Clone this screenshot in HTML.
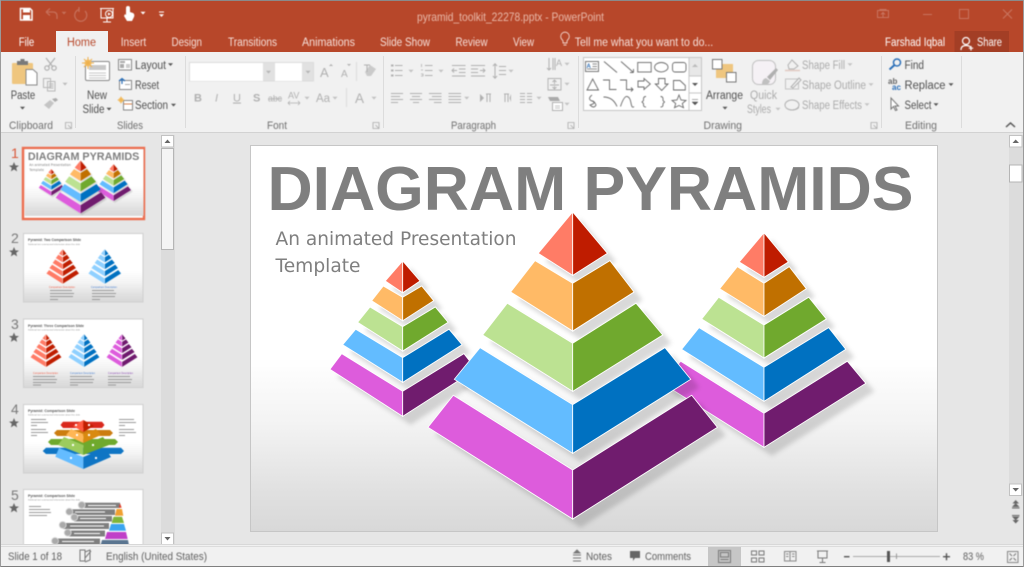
<!DOCTYPE html>
<html><head><meta charset="utf-8"><title>pyramid_toolkit_22278.pptx - PowerPoint</title>
<style>
html,body{margin:0;padding:0;width:1024px;height:567px;overflow:hidden;background:#e6e6e6}
svg{display:block}
text{font-family:"Liberation Sans",sans-serif}
.soft{filter:blur(.4px)}
.soft2{filter:blur(.55px)}
.s0{filter:blur(.25px)}
.g{stroke:#6a6a6a;fill:none;stroke-width:.9}
</style></head><body>
<svg width="1024" height="567" viewBox="0 0 1024 567" xmlns="http://www.w3.org/2000/svg">
<defs>
<linearGradient id="bg" x1="0" y1="0" x2="0" y2="1"><stop offset="0" stop-color="#fff"/><stop offset=".55" stop-color="#fff"/><stop offset=".72" stop-color="#f3f3f3"/><stop offset=".9" stop-color="#e0e0e0"/><stop offset="1" stop-color="#d8d8d8"/></linearGradient>
<filter id="sh" x="-20%" y="-20%" width="150%" height="150%"><feDropShadow dx="8" dy="8" stdDeviation="2.500" flood-color="#000" flood-opacity=".15"/></filter>
<clipPath id="c5"><rect x="0" y="0" width="160" height="546"/></clipPath>

<g id="pL" stroke="#fff" stroke-width="3">
<polygon points="572.7,212 538.3,253.3 572.7,275.3"/>
<polygon points="535,260.7 510.7,292 572.7,331 572.7,283.3"/>
<polygon points="507.3,303.3 482.7,335 572.7,391.3 572.7,343.3"/>
<polygon points="480,347.7 454.3,379.3 572.7,453.3 572.7,404.7"/>
<polygon points="453.3,395.3 428,427.3 572.7,519 572.7,470"/>
</g>
<g id="pR" stroke="#fff" stroke-width="3">
<polygon points="572.7,212 607.3,253.3 572.7,275.3"/>
<polygon points="610,260.7 634,292 572.7,331 572.7,283.3"/>
<polygon points="636,303.3 662.7,335 572.7,391.3 572.7,343.3"/>
<polygon points="665,347.7 690.7,379.3 572.7,453.3 572.7,404.7"/>
<polygon points="691.7,395.3 717.3,427.3 572.7,519 572.7,470"/>
</g>

<g id="slideArt">
<rect x="250.5" y="145.5" width="687" height="386" fill="url(#bg)" stroke="#c6c6c6"/>
<text x="267.500" y="210" font-size="62" font-weight="700" fill="#7f7f7f" textLength="646" lengthAdjust="spacingAndGlyphs">DIAGRAM PYRAMIDS</text>
<text x="275.5" y="245" font-size="19" style="font-family:'DejaVu Sans',sans-serif" fill="#7f7f7f" textLength="241" lengthAdjust="spacingAndGlyphs">An animated Presentation</text>
<text x="275.5" y="272" font-size="19" style="font-family:'DejaVu Sans',sans-serif" fill="#7f7f7f" textLength="85" lengthAdjust="spacingAndGlyphs">Template</text>

<g filter="url(#sh)" stroke="#fff" stroke-width=".8">
<polygon fill="#dd5cdc" points="680.7,361.3 662.3,383.3 764,447.3 764,413.3"/>
<polygon fill="#6f1a6e" points="847.3,361.3 865.7,383.3 764,447.3 764,413.3"/>
<polygon fill="#64bcff" points="699,327.7 681.7,349.3 764,401.3 764,367.3"/>
<polygon fill="#0071c1" points="828.7,327.7 845.7,349.3 764,401.3 764,367.3"/>
<polygon fill="#bce292" points="718.7,297.3 701.7,319 764,358 764,325"/>
<polygon fill="#6fa92d" points="808.7,297.3 826.3,319 764,358 764,325"/>
<polygon fill="#ffba66" points="737.3,266.7 719.7,288.7 764,316.3 764,283.3"/>
<polygon fill="#c06f00" points="789.3,266.7 806.3,288.7 764,316.3 764,283.3"/>
<polygon fill="#ff7b66" points="764,232.7 739.3,262 764,277.3"/>
<polygon fill="#bf1e00" points="764,232.7 788.3,262 764,277.3"/>
</g>
<g filter="url(#sh)" stroke="#fff" stroke-width=".8">
<polygon fill="#dd5cdc" points="341.7,353.7 330,369.3 402.7,416.3 402.7,391.3"/>
<polygon fill="#6f1a6e" points="464,353.7 476,369.3 402.7,416.3 402.7,391.3"/>
<polygon fill="#64bcff" points="355.7,329.3 342.7,344.7 402.7,382.3 402.7,357.7"/>
<polygon fill="#0071c1" points="449,329.3 462,344.7 402.7,382.3 402.7,357.7"/>
<polygon fill="#bce292" points="370,307 357.7,322.3 402.7,351 402.7,326.7"/>
<polygon fill="#6fa92d" points="435.3,307 448,322.3 402.7,351 402.7,326.7"/>
<polygon fill="#ffba66" points="383.3,286 371.7,300.7 402.7,320.7 402.7,297.3"/>
<polygon fill="#c06f00" points="421.7,286 433.7,300.7 402.7,320.7 402.7,297.3"/>
<polygon fill="#ff7b66" points="402.7,261 385.3,281 402.7,292.7"/>
<polygon fill="#bf1e00" points="402.7,261 420,281 402.7,292.7"/>
</g>
<g filter="url(#sh)" stroke="#fff" stroke-width=".8">
<polygon fill="#dd5cdc" points="453.3,395.3 428,427.3 572.7,519 572.7,470"/>
<polygon fill="#6f1a6e" points="691.7,395.3 717.3,427.3 572.7,519 572.7,470"/>
<polygon fill="#64bcff" points="480,347.7 454.3,379.3 572.7,453.3 572.7,404.7"/>
<polygon fill="#0071c1" points="665,347.7 690.7,379.3 572.7,453.3 572.7,404.7"/>
<polygon fill="#bce292" points="507.3,303.3 482.7,335 572.7,391.3 572.7,343.3"/>
<polygon fill="#6fa92d" points="636,303.3 662.7,335 572.7,391.3 572.7,343.3"/>
<polygon fill="#ffba66" points="535,260.7 510.7,292 572.7,331 572.7,283.3"/>
<polygon fill="#c06f00" points="610,260.7 634,292 572.7,331 572.7,283.3"/>
<polygon fill="#ff7b66" points="572.7,212 538.3,253.3 572.7,275.3"/>
<polygon fill="#bf1e00" points="572.7,212 607.3,253.3 572.7,275.3"/>
</g>
</g>

<polygon id="star" points="0,-5 1.4,-1.6 5,-1.4 2.2,.8 3.1,4.4 0,2.4 -3.1,4.4 -2.2,.8 -5,-1.4 -1.4,-1.6"/>
<path id="caret" d="M-2.5,-1.2H2.5L0,1.5Z"/>
</defs>

<rect width="1024" height="567" fill="#e6e6e6"/>

<g class="s0"><use href="#slideArt"/></g>

<!-- main scrollbar -->
<rect x="1009" y="135" width="14" height="410" fill="#dcdcdc"/>
<rect x="1009.5" y="135.5" width="12.5" height="11.5" fill="#fff" stroke="#c2c2c2"/>
<path d="M1012.5,143H1019L1015.7,139.5Z" fill="#666"/>
<rect x="1009.5" y="165" width="12.5" height="17" fill="#fff" stroke="#b5b5b5"/>
<rect x="1009.5" y="484" width="12" height="11.5" fill="#fff" stroke="#c2c2c2"/>
<path d="M1012.5,488H1019L1015.7,491.5Z" fill="#666"/>
<rect x="1009" y="496" width="14" height="49" fill="#e6e6e6"/>
<g class="soft" fill="#666">
<path d="M1015.7,500L1012.5,503.5H1019ZM1015.7,503L1012,507H1019.5ZM1012,507.5H1019.5V508.5H1012Z"/>
<path d="M1012,515H1019.5V516H1012ZM1012,516.5H1019.5L1015.7,520.5ZM1012.5,520H1019L1015.7,523.5Z"/>
</g>

<!-- thumbnail pane -->
<rect x="0" y="133" width="176" height="413" fill="#e6e6e6"/>
<rect x="161" y="135" width="14" height="410" fill="#dcdcdc"/>
<rect x="161.5" y="135.5" width="12" height="11.5" fill="#fff" stroke="#c2c2c2"/>
<path d="M164.5,143H170.5L167.5,139.5Z" fill="#666"/>
<rect x="161.5" y="148.5" width="12" height="101" fill="#f4f4f4" stroke="#b5b5b5"/>
<rect x="161.5" y="533" width="12" height="11.5" fill="#fff" stroke="#c2c2c2"/>
<path d="M164.5,537H170.5L167.5,540.5Z" fill="#666"/>

<g class="soft2" clip-path="url(#c5)">
<rect x="23" y="148" width="121" height="71" fill="#fff" stroke="#ec6d4e" stroke-width="2.4"/>
<g transform="translate(24.9,149) scale(.1725) translate(-250,-145)"><use href="#slideArt"/></g>
<rect x="23.5" y="233.5" width="119.5" height="68.5" fill="url(#bg)" stroke="#cfcfcf"/>
<text x="28" y="241" font-size="3.4" font-weight="700" fill="#555" textLength="53" lengthAdjust="spacingAndGlyphs">Pyramid: Two Comparison Slide</text>
<text x="28" y="245" font-size="2.2" fill="#888" textLength="52" lengthAdjust="spacingAndGlyphs">Subhead text summarized information about this slide</text>
<g transform="translate(62.7,249) scale(.114) translate(-572.7,-212)"><use href="#pL" fill="#ff7b66"/><use href="#pR" fill="#bf1e00"/></g>
<g transform="translate(104.7,249) scale(.114) translate(-572.7,-212)"><use href="#pL" fill="#8fd0ff"/><use href="#pR" fill="#0071c1"/></g>
<text x="49" y="288" font-size="2.5" fill="#f0604a" textLength="26" lengthAdjust="spacingAndGlyphs">Comparison Description</text>
<text x="91" y="288" font-size="2.5" fill="#4a80d0" textLength="26" lengthAdjust="spacingAndGlyphs">Comparison Description</text>
<g fill="#999"><rect x="50" y="290" width="22" height="1"/><rect x="50" y="293" width="24" height="1"/><rect x="50" y="296" width="23" height="1"/><rect x="50" y="299" width="8" height="1"/><rect x="92" y="290" width="22" height="1"/><rect x="92" y="293" width="24" height="1"/><rect x="92" y="296" width="23" height="1"/><rect x="92" y="299" width="8" height="1"/></g>
<rect x="23.5" y="319" width="119.5" height="68.5" fill="url(#bg)" stroke="#cfcfcf"/>
<text x="28" y="327" font-size="3.4" font-weight="700" fill="#555" textLength="56" lengthAdjust="spacingAndGlyphs">Pyramid: Three Comparison Slide</text>
<text x="28" y="330.5" font-size="2.2" fill="#888" textLength="52" lengthAdjust="spacingAndGlyphs">Subhead text summarized information about this slide</text>
<g transform="translate(46,334) scale(.108) translate(-572.7,-212)"><use href="#pL" fill="#ff7b66"/><use href="#pR" fill="#bf1e00"/></g>
<g transform="translate(84,334) scale(.108) translate(-572.7,-212)"><use href="#pL" fill="#8fd0ff"/><use href="#pR" fill="#0071c1"/></g>
<g transform="translate(122,334) scale(.108) translate(-572.7,-212)"><use href="#pL" fill="#dd5cdc"/><use href="#pR" fill="#6f1a6e"/></g>
<text x="33" y="374" font-size="2.5" fill="#f0604a" textLength="25" lengthAdjust="spacingAndGlyphs">Comparison Description</text>
<text x="70" y="374" font-size="2.5" fill="#4a80d0" textLength="25" lengthAdjust="spacingAndGlyphs">Comparison Description</text>
<text x="108" y="374" font-size="2.5" fill="#8a4ab0" textLength="25" lengthAdjust="spacingAndGlyphs">Comparison Description</text>
<g fill="#999"><rect x="33" y="376" width="22" height="1"/><rect x="33" y="379" width="24" height="1"/><rect x="33" y="382" width="23" height="1"/><rect x="33" y="384.5" width="8" height="1"/><rect x="70" y="376" width="22" height="1"/><rect x="70" y="379" width="24" height="1"/><rect x="70" y="382" width="23" height="1"/><rect x="70" y="384.5" width="8" height="1"/><rect x="108" y="376" width="22" height="1"/><rect x="108" y="379" width="24" height="1"/><rect x="108" y="382" width="23" height="1"/><rect x="108" y="384.5" width="8" height="1"/></g>
<rect x="23.5" y="404.5" width="119.5" height="68.5" fill="url(#bg)" stroke="#cfcfcf"/>
<text x="28" y="412" font-size="3.4" font-weight="700" fill="#555" textLength="47" lengthAdjust="spacingAndGlyphs">Pyramid: Comparison Slide</text>
<text x="28" y="415.5" font-size="2.2" fill="#888" textLength="52" lengthAdjust="spacingAndGlyphs">Subhead text summarized information about this slide</text>
<g fill="#999"><rect x="31" y="419" width="15" height="1"/><rect x="31" y="422" width="17" height="1"/><rect x="31" y="425" width="6" height="1"/><rect x="31" y="429" width="15" height="1"/><rect x="31" y="432" width="17" height="1"/><rect x="31" y="435" width="6" height="1"/><rect x="119" y="419" width="15" height="1"/><rect x="119" y="422" width="17" height="1"/><rect x="119" y="425" width="6" height="1"/><rect x="119" y="429" width="15" height="1"/><rect x="119" y="432" width="17" height="1"/><rect x="119" y="435" width="6" height="1"/></g>
<polygon points="63,421.7 102,421.7 104.500,425 102,428 63,428 60.500,425" fill="#d9281c"/>
<polygon points="57,430 110,430 113,433 110,436 57,436 54,433" fill="#cc7d10"/>
<polygon points="51,439 115,439 118,442 115,445 51,445 48,442" fill="#6fa92d"/>
<polygon points="46,447.700 121,447.700 124,451 121,454 46,454 42.700,451" fill="#0f75c4"/>
<polygon points="83.300,420 73,426 83.300,432" fill="#ff5a40"/><polygon points="83.300,420 94,426 83.300,432" fill="#c01f00"/>
<polygon points="71,429 66,435 83.300,443 83.300,434" fill="#ffb655"/><polygon points="96,429 101,435 83.300,443 83.300,434" fill="#d98a10"/>
<polygon points="64,437 58,445 83.300,455 83.300,445" fill="#9ccb5e"/><polygon points="103,437 109,445 83.300,455 83.300,445" fill="#6fa92d"/>
<polygon points="59,448 55.300,456.700 83.300,469 83.300,457" fill="#64bcff"/><polygon points="105,448 111,457 83.300,469 83.300,457" fill="#0f75c4"/>
<g fill="#fff"><rect x="75" y="424" width="2" height="2"/><rect x="88" y="424" width="2" height="2"/><rect x="76" y="434" width="2" height="2"/><rect x="88" y="434" width="2" height="2"/><rect x="72" y="444" width="2" height="2"/><rect x="92" y="444" width="2" height="2"/><rect x="70" y="457" width="2" height="2"/><rect x="95" y="457" width="2" height="2"/></g>
<rect x="23.5" y="489.5" width="119.5" height="68.5" fill="#fff" stroke="#cfcfcf"/>
<text x="28" y="497" font-size="3.4" font-weight="700" fill="#555" textLength="47" lengthAdjust="spacingAndGlyphs">Pyramid: Comparison Slide</text>
<text x="28" y="500.5" font-size="2.2" fill="#888" textLength="52" lengthAdjust="spacingAndGlyphs">Subhead text summarized information about this slide</text>
<g fill="#999"><rect x="29" y="506" width="12" height="1"/><rect x="29" y="509" width="21" height="1"/><rect x="29" y="512" width="22" height="1"/><rect x="29" y="515" width="18" height="1"/></g>
<g fill="#7f7f7f"><rect x="82" y="502.700" width="38" height="5.300"/><rect x="70" y="509.300" width="45" height="5.700"/><rect x="74" y="516" width="38" height="5.500"/><rect x="63" y="523" width="46" height="6"/><rect x="68" y="530.500" width="37" height="6"/><rect x="55" y="538.500" width="45" height="6"/></g>
<g fill="#fff"><rect x="88" y="505" width="28" height="1"/><rect x="75" y="511.500" width="30" height="1"/><rect x="80" y="518" width="26" height="1"/><rect x="70" y="525.500" width="34" height="1"/><rect x="74" y="533" width="26" height="1"/><rect x="62" y="541" width="32" height="1"/></g>
<g fill="#aaa" stroke="#ddd" stroke-width=".8"><circle cx="81.700" cy="505" r="3.500"/><circle cx="69.300" cy="511.700" r="3.500"/><circle cx="74.300" cy="517.300" r="3.500"/><circle cx="62.700" cy="525" r="3.500"/><circle cx="67.700" cy="532.700" r="3.500"/><circle cx="55" cy="541" r="3.500"/></g>
<polygon points="120,503.300 121.700,507.700 118.700,507.700" fill="#e0402a"/>
<polygon points="116.500,509 122,509 123.300,515.700 115,515.700" fill="#f0a030"/>
<polygon points="113.500,516.700 122,516.700 124,523 111.700,523" fill="#7fb53a"/>
<polygon points="111,524 124,524 126,530.700 109,530.700" fill="#3aa5f0"/>
<polygon points="107,532 126,532 127.700,539 105,539" fill="#c040c8"/>
<polygon points="102,540 128,540 129.300,547 100,547" fill="#5a7590"/>
</g>
<g font-size="14" fill="#7a7a7a" class="soft">
<text x="11" y="158" fill="#d9583a">1</text><text x="11" y="243">2</text><text x="11" y="329">3</text><text x="11" y="414">4</text><text x="11" y="500">5</text>
</g>
<g fill="#666" class="soft"><use href="#star" x="14" y="167"/><use href="#star" x="14" y="252"/><use href="#star" x="14" y="337.500"/><use href="#star" x="14" y="423"/><use href="#star" x="14" y="508"/></g>

<!-- title bar and tabs -->
<rect width="1024" height="52" fill="#b7472a"/>
<rect x="0" y="0" width="1024" height="1" fill="#8a8a8a"/>
<rect x="954.500" y="31" width="54.500" height="21" fill="#a33e25"/>
<rect x="56" y="31" width="52" height="22" fill="#f1f1f1"/>

<g class="soft">
<path d="M20.500,8.500H30L32,10.500V20H20.500Z" fill="none" stroke="#fff" stroke-width="1.500"/><rect x="23" y="9" width="7" height="3.500" fill="#fff"/><rect x="23" y="15" width="7" height="4.500" fill="#fff"/>
<path d="M46,12L50,8.500M46,12L50,15.500M46,12H53Q57,12 57,16V19" fill="none" stroke="#c66f59" stroke-width="1.300"/>
<use href="#caret" x="64" y="13" fill="#c66f59"/>
<path d="M79,9.500A6,6 0 1 0 85,11M79,7V12" fill="none" stroke="#c66f59" stroke-width="1.300"/>
<path d="M100,8.500H114M101,9V18H113V9M107,18V22M103,22H111" fill="none" stroke="#fff" stroke-width="1"/><circle cx="109" cy="14" r="3.500" fill="none" stroke="#fff"/><path d="M108,12.500L111,14L108,15.500Z" fill="#fff"/>
<path d="M126,8Q126,6 128,6Q130,6 130,8V12L133,13Q135,14 134,17L132,21H127L124,16L125,14L126,15Z" fill="#fff"/>
<use href="#caret" x="143" y="13" fill="#fff"/>
<path d="M159,12H164" stroke="#fff"/><use href="#caret" x="161.500" y="15.500" fill="#fff"/>

<text x="417" y="21" font-size="12" fill="#e9b9a9" textLength="187" lengthAdjust="spacingAndGlyphs">pyramid_toolkit_22278.pptx - PowerPoint</text>

<g stroke="#c97560" fill="none"><rect x="877.500" y="10.500" width="11" height="7"/><path d="M880,10.500V9.500H886V10.500M883,17V12.500M881,14.500L883,12.500L885,14.500"/><path d="M923,14.500H932"/><rect x="959.500" y="9.500" width="9" height="9"/><path d="M1003,9.500L1012,18.500M1012,9.500L1003,18.500" stroke-width="1.100"/></g>

<g font-size="11.500" fill="#f6e0da">
<text x="18.700" y="46" fill="#fff" textLength="15.500" lengthAdjust="spacingAndGlyphs">File</text>
<text x="67" y="46" fill="#b7472a" textLength="29" lengthAdjust="spacingAndGlyphs">Home</text>
<text x="120.700" y="46" textLength="25.500" lengthAdjust="spacingAndGlyphs">Insert</text>
<text x="171.500" y="46" textLength="30.500" lengthAdjust="spacingAndGlyphs">Design</text>
<text x="228" y="46" textLength="49" lengthAdjust="spacingAndGlyphs">Transitions</text>
<text x="302" y="46" textLength="53" lengthAdjust="spacingAndGlyphs">Animations</text>
<text x="380" y="46" textLength="50" lengthAdjust="spacingAndGlyphs">Slide Show</text>
<text x="455.500" y="46" textLength="32" lengthAdjust="spacingAndGlyphs">Review</text>
<text x="513" y="46" textLength="21" lengthAdjust="spacingAndGlyphs">View</text>
<text x="574.700" y="46" textLength="138.500" lengthAdjust="spacingAndGlyphs">Tell me what you want to do...</text>
<text x="885" y="46" fill="#fff" textLength="60" lengthAdjust="spacingAndGlyphs">Farshad Iqbal</text>
<text x="977" y="46" fill="#fff" textLength="25" lengthAdjust="spacingAndGlyphs">Share</text>
</g>
<path d="M563,43V41.500Q563,40.500 562,39.500A4.300,4.300 0 1 1 568,39.500Q567,40.500 567,41.500V43ZM563.500,45H566.500" fill="none" stroke="#f3d8d0" stroke-width=".9"/>
<circle cx="966" cy="41" r="3.500" fill="none" stroke="#fff" stroke-width="1.200"/><path d="M961,50Q961,45.500 966,45.500Q969,45.500 970.500,47M971,46V50.500M968.800,48.200H973.200" fill="none" stroke="#fff" stroke-width="1.200"/>
</g>

<!-- ribbon -->
<rect x="0" y="52" width="1024" height="81" fill="#f1f1f1"/>
<rect x="0" y="132" width="1024" height="1" fill="#d2d2d2"/>
<g fill="#dcdcdc"><rect x="75" y="56" width="1" height="72"/><rect x="185" y="56" width="1" height="72"/><rect x="383" y="56" width="1" height="72"/><rect x="578" y="56" width="1" height="72"/><rect x="881" y="56" width="1" height="72"/><rect x="961" y="56" width="1" height="72"/></g>

<g class="soft">
<g font-size="11" fill="#707070">
<text x="9" y="129" textLength="44" lengthAdjust="spacingAndGlyphs">Clipboard</text>
<text x="117" y="129" textLength="26" lengthAdjust="spacingAndGlyphs">Slides</text>
<text x="267" y="129" textLength="20" lengthAdjust="spacingAndGlyphs">Font</text>
<text x="451" y="129" textLength="45" lengthAdjust="spacingAndGlyphs">Paragraph</text>
<text x="703.500" y="129" textLength="38.500" lengthAdjust="spacingAndGlyphs">Drawing</text>
<text x="905" y="129" textLength="32" lengthAdjust="spacingAndGlyphs">Editing</text>
</g>
<g stroke="#aaa" fill="none" stroke-width=".8"><path d="M65.500,122.500H71.500V128.500H65.500ZM68,125L71,128"/><path d="M373,122.500H379V128.500H373ZM375.500,125L378.500,128"/><path d="M568,122.500H574V128.500H568ZM570.500,125L573.500,128"/><path d="M871,122.500H877V128.500H871ZM873.500,125L876.500,128"/></g>
<path d="M1006,127L1010.500,123L1015,127" fill="none" stroke="#555" stroke-width="1.500"/>

<!-- clipboard -->
<rect x="12" y="63" width="21" height="21" rx="1" fill="#efc67f"/>
<rect x="17" y="61" width="11" height="4" fill="#7a7a7a"/><rect x="20.500" y="59" width="4" height="3" fill="#7a7a7a"/>
<path d="M26,69.500H33L37,73V85H26Z" fill="#fff" stroke="#888"/>
<text x="10.700" y="99" font-size="11.500" fill="#505050" textLength="24.500" lengthAdjust="spacingAndGlyphs">Paste</text>
<use href="#caret" x="22.500" y="108" fill="#555"/>
<path d="M46,58L53,67M55,58L48,67" stroke="#b0b0b0" fill="none" stroke-width="1.200"/><circle cx="47" cy="68" r="2.200" fill="none" stroke="#b0b0b0" stroke-width="1.200"/><circle cx="54" cy="68" r="2.200" fill="none" stroke="#b0b0b0" stroke-width="1.200"/>
<path d="M43.500,78.500H50.500V87.500H43.500ZM47.500,81.500H55V91H47.500ZM49,84H53.500M49,86H53.500M49,88H53.500" fill="#f1f1f1" stroke="#b8b8b8"/>
<use href="#caret" x="65" y="84" fill="#bbb"/>
<path d="M44,105L50,100L54,103L49,109Z" fill="#c4c4c4"/><path d="M52,99L56,98L58,100L55,102Z" fill="#aaa"/>

<!-- new slide -->
<rect x="85.500" y="61.500" width="24" height="19" rx="1.500" fill="#fff" stroke="#888"/>
<rect x="89" y="65" width="17" height="5" fill="#c8c8c8"/><path d="M89,73H106M89,75.500H106M89,78H106" stroke="#b5b5b5" stroke-width=".8"/>
<circle cx="88" cy="63" r="3.500" fill="#f4c26a"/><path d="M88,57V69M82,63H94M84,59L92,67M92,59L84,67" stroke="#eeb04d" stroke-width="1"/>
<g font-size="11.500" fill="#505050">
<text x="87" y="99" textLength="20" lengthAdjust="spacingAndGlyphs">New</text>
<text x="82.500" y="113" textLength="22" lengthAdjust="spacingAndGlyphs">Slide</text>
<text x="135" y="69" textLength="31" lengthAdjust="spacingAndGlyphs">Layout</text>
<text x="135" y="89" textLength="24" lengthAdjust="spacingAndGlyphs">Reset</text>
<text x="135" y="109" textLength="33" lengthAdjust="spacingAndGlyphs">Section</text>
</g>
<use href="#caret" x="109" y="109" fill="#555"/><use href="#caret" x="170.500" y="64.500" fill="#555"/><use href="#caret" x="173.500" y="105" fill="#555"/>
<rect x="118.500" y="59.500" width="13" height="10.500" fill="#fff" stroke="#888"/><rect x="120" y="61" width="5" height="2" fill="#aaa"/><rect x="120" y="64" width="4" height="4" fill="#aaa"/><rect x="126" y="64" width="4" height="4" fill="#ccc"/>
<rect x="119.500" y="80.500" width="12" height="9" fill="#fff" stroke="#888"/><path d="M119,81L122,78.500L125,81M122,79V84" fill="none" stroke="#2b6fb8" stroke-width="1.200"/><rect x="125" y="84" width="5" height="1" fill="#aaa"/>
<rect x="123.500" y="100.500" width="9" height="9.500" fill="#fff" stroke="#888"/><path d="M124,104H132" stroke="#d9844a"/><circle cx="121" cy="100" r="2.500" fill="#f4c26a"/><path d="M121,96.500V103.500M117.500,100H124.500" stroke="#eeb04d" stroke-width=".8"/>

<!-- font -->
<rect x="189.500" y="62.500" width="124" height="18.500" fill="#e1e1e1" stroke="#dcdcdc"/>
<rect x="190" y="63" width="73" height="18" fill="#fff"/><rect x="275" y="63" width="27" height="18" fill="#fff"/>
<use href="#caret" x="268.500" y="72" fill="#b5b5b5"/><use href="#caret" x="308" y="72" fill="#b5b5b5"/>
<g fill="#b0b0b0">
<text x="320" y="77" font-size="13">A</text><text x="341" y="77" font-size="10">A</text>
<path d="M329,66L331,64L333,66ZM347,64H351L349,66Z"/>
<text x="194" y="101.500" font-size="11" font-weight="700">B</text>
<text x="215" y="101.500" font-size="11" font-style="italic" font-family="Liberation Serif">I</text>
<text x="233" y="101.500" font-size="11" text-decoration="underline">U</text>
<text x="253" y="101.500" font-size="11" font-weight="700">S</text>
<text x="268" y="101.500" font-size="9.500" text-decoration="line-through" textLength="14" lengthAdjust="spacingAndGlyphs">abc</text>
<text x="288" y="98.500" font-size="9">AV</text>
<text x="316" y="102" font-size="11.500">Aa</text>
<text x="355" y="103" font-size="13.500">A</text>
</g>
<path d="M288,103H300M288,103L290,101M288,103L290,105M300,103L298,101M300,103L298,105" stroke="#b0b0b0" fill="none" stroke-width=".8"/>
<g fill="#c0c0c0"><use href="#caret" x="307" y="98"/><use href="#caret" x="335" y="98"/><use href="#caret" x="374" y="98"/></g>
<rect x="356" y="62" width="1" height="19" fill="#ddd"/><rect x="346" y="88" width="1" height="19" fill="#ddd"/>
<path d="M365,72L370,65L376,69L371,76H367Z" fill="#cacaca"/><path d="M364,65H370M367,65V72" stroke="#b0b0b0"/>

<!-- paragraph -->
<g stroke="#b0b0b0" fill="none">
<path d="M395,65.500H402.500M395,70.500H402.500M395,75.500H402.500"/><path d="M391,65.500H393.500M391,70.500H393.500M391,75.500H393.500" stroke-width="2"/>
<path d="M425,65.500H432.500M425,70.500H432.500M425,75.500H432.500"/><path d="M421.500,64V67M421,70H423M421,74H423V76H421" stroke-width=".8"/>
<path d="M452,65.500H465.500M459,69H465.500M459,72.500H465.500M452,76H465.500"/><path d="M457,70.500H452M454,68.500L452,70.500L454,72.500"/>
<path d="M471,65.500H485M471,69H478M471,72.500H478M471,76H485"/><path d="M480,70.500H485M483,68.500L485,70.500L483,72.500"/>
<path d="M495,64V78M493,66L495,63.700L497,66M493,76L495,78.300L497,76M499,66.500H506M499,70.500H506M499,74.500H506"/>
<path d="M391,93.500H403M391,96.500H400M391,99.500H403M391,102.500H398"/>
<path d="M410,93.500H422M412,96.500H420M410,99.500H422M413,102.500H419"/>
<path d="M429,93.500H441.500M432,96.500H441.500M429,99.500H441.500M434,102.500H441.500"/>
<path d="M448.500,93.500H461M448.500,96.500H461M448.500,99.500H461M448.500,102.500H461"/>
<path d="M520,93.500H525M527,93.500H532M520,96.500H525M527,96.500H532M520,99.500H525M527,99.500H532M520,102.500H525M527,102.500H532"/>
<path d="M487,94V102M490,94V102M486,94H491"/><path d="M505,94V102M508,94V102M504,94H509"/>
</g>
<g fill="#b0b0b0"><path d="M480,94V102L484,98ZM511,94V102L509.500,98Z"/></g>
<g fill="#c0c0c0"><use href="#caret" x="411" y="71"/><use href="#caret" x="441" y="71"/><use href="#caret" x="511" y="71"/><use href="#caret" x="466.700" y="98"/><use href="#caret" x="539" y="98"/><use href="#caret" x="567" y="64"/><use href="#caret" x="567" y="84"/><use href="#caret" x="567" y="104"/></g>
<g stroke="#b0b0b0" fill="none"><path d="M549,58V70M547,68L549,70L551,68M553,58V70M555,58V70"/><path d="M548,78.500H561V90H548ZM554.500,80V84M552.500,82L554.500,80L556.500,82M554.500,89V86M552.500,87L554.500,89L556.500,87M550,85H559" stroke-width=".9"/></g>
<text x="556" y="66" font-size="9" fill="#b0b0b0">A</text>
<path d="M548,97H558L560,101H550Z" fill="#aaa"/><rect x="552.500" y="102.500" width="10" height="8" fill="#fff" stroke="#b0b0b0"/><path d="M555,106H560M555,108H560" stroke="#b0b0b0" stroke-width=".8"/>

<!-- shape gallery -->
<rect x="583.500" y="57.500" width="118" height="53" fill="#fff" stroke="#c6c6c6"/>
<rect x="689" y="58" width="12" height="18" fill="#e8e8e8"/>
<path d="M689,76H701M689,93H701M689,58V110" stroke="#c6c6c6" fill="none"/>
<path d="M692,67H698L695,64Z" fill="#bbb"/><path d="M692,83H698L695,86Z" fill="#555"/><path d="M692,99.500H698M692,102H698L695,105Z" fill="#555" stroke="#555" stroke-width=".5"/>
<g class="g">
<rect x="585.500" y="61.500" width="13" height="10"/><path d="M592.500,64H597M592.500,66.500H597M587,69H597" stroke-width=".8"/>
<path d="M604,61.500L617,72.500"/><path d="M621,61.500L633.500,72.500M633.500,72.500V69M633.500,72.500H630"/>
<rect x="637.700" y="62.500" width="13.500" height="9.500"/><ellipse cx="661.300" cy="67.200" rx="6.700" ry="4.700"/><rect x="672.500" y="62.500" width="13.500" height="9.500" rx="2.500"/>
<path d="M592.700,79L587,90H598.500Z"/><path d="M603,80H609.500V89.500H616.500"/><path d="M620,80H626.500V89.500H633M631,87.500L633,89.500L631,91.500"/>
<path d="M638,81H644V78.500L650.300,84L644,89.500V87H638Z"/><path d="M658.500,78.500H665V84H668L661.700,90.500L655.300,84H658.500Z"/><path d="M673.500,80.500H680L685.300,85.500V90H673.500Z"/>
<path d="M592,95Q587,99 592,101T590,105Q594,109 596,105Q594,100 591,101"/><path d="M603.500,97Q613,97 617,106.500"/><path d="M620.500,106.500Q624,96 627,96.500Q630,97 631,103T634,106.500"/>
<path d="M646,96.500Q643.500,96.500 643.500,99V100.500L642,102L643.500,103.500V105Q643.500,107 646,107M660.500,96.500Q663,96.500 663,99V100.500L664.500,102L663,103.500V105Q663,107 660.500,107"/>
<polygon points="679,95 681,100 686,100.500 682.300,103.500 683.500,107.700 679,105.500 674.500,107.700 675.700,103.500 672,100.500 677,100"/>
</g>
<text x="586.500" y="68" font-size="6" font-weight="700" fill="#2f6fb5">A</text>

<!-- arrange -->
<rect x="716" y="64" width="17" height="14" fill="#efc67f"/>
<rect x="712.500" y="59.500" width="9.500" height="9.500" fill="#fff" stroke="#777"/><rect x="726.500" y="72.500" width="9.500" height="9.500" fill="#fff" stroke="#777"/>
<text x="706" y="99" font-size="11.500" fill="#505050" textLength="37" lengthAdjust="spacingAndGlyphs">Arrange</text>
<use href="#caret" x="725" y="108" fill="#555"/>
<!-- quick styles -->
<rect x="752.500" y="60.500" width="23" height="24" rx="6" fill="#f5f1f5" stroke="#c0c0c0"/>
<path d="M762,84Q762,79 766,78L770,81Q769,85 763,85Z" fill="#c0c0c0"/><path d="M767,77L776,68L778,70L770,80Z" fill="#b0b0b0"/>
<g font-size="11.500" fill="#ababab">
<text x="750" y="99" textLength="27" lengthAdjust="spacingAndGlyphs">Quick</text>
<text x="747" y="113" textLength="24" lengthAdjust="spacingAndGlyphs">Styles</text>
<text x="802" y="69" textLength="43" lengthAdjust="spacingAndGlyphs">Shape Fill</text>
<text x="802" y="89" textLength="64" lengthAdjust="spacingAndGlyphs">Shape Outline</text>
<text x="802" y="109" textLength="60" lengthAdjust="spacingAndGlyphs">Shape Effects</text>
</g>
<g fill="#c4c4c4"><use href="#caret" x="778" y="109"/><use href="#caret" x="850" y="64.500"/><use href="#caret" x="871" y="84.500"/><use href="#caret" x="867" y="104.500"/></g>
<path d="M788,65L792,60L798,66L794,69H789Z" fill="#f1f1f1" stroke="#b0b0b0"/><path d="M785,70.500H800" stroke="#e0c8c0" stroke-width="1.500"/>
<rect x="785.500" y="79" width="13" height="10" fill="none" stroke="#c4c4c4"/><path d="M791,87L799,78L801,80L793,88Z" fill="#f1f1f1" stroke="#b0b0b0"/>
<ellipse cx="792" cy="105" rx="7" ry="5" fill="#f1f1f1" stroke="#b0b0b0"/><path d="M790,110Q798,110 799,104L799,108Q796,111 790,110Z" fill="#b0b0b0"/>

<!-- editing -->
<circle cx="897" cy="62.500" r="3.500" fill="none" stroke="#2b6fb8" stroke-width="1.500"/><path d="M894.500,65L889.500,69.500" stroke="#2b6fb8" stroke-width="2"/>
<g font-size="11.500" fill="#505050">
<text x="904.500" y="69" textLength="19.500" lengthAdjust="spacingAndGlyphs">Find</text>
<text x="904.500" y="89" textLength="41" lengthAdjust="spacingAndGlyphs">Replace</text>
<text x="904.500" y="109" textLength="27" lengthAdjust="spacingAndGlyphs">Select</text>
</g>
<text x="888" y="84" font-size="8" font-weight="700" fill="#666">ab</text><text x="892" y="90" font-size="8" font-weight="700" fill="#2b6fb8">ac</text>
<use href="#caret" x="951" y="84.500" fill="#555"/><use href="#caret" x="936" y="104.500" fill="#555"/>
<path d="M891,98V109L893.500,106.500L895.500,110.500L897,110L895,106H898.500Z" fill="#fff" stroke="#777"/>
</g>

<!-- status bar -->
<rect x="0" y="545" width="1024" height="22" fill="#f1f1f1"/>
<rect x="0" y="544" width="1024" height="1" fill="#d8d8d8"/>
<rect x="0" y="546" width="1024" height="1" fill="#dcdcdc"/>
<rect x="708" y="547" width="33" height="19" fill="#c6c6c6"/>
<rect x="0" y="566" width="1024" height="1" fill="#7f7f7f"/>
<rect x="0" y="0" width="1" height="567" fill="#9a9a9a"/><rect x="1023" y="0" width="1" height="567" fill="#9a9a9a"/>
<g class="soft">
<g font-size="11" fill="#606060">
<text x="8" y="560" textLength="54" lengthAdjust="spacingAndGlyphs">Slide 1 of 18</text>
<text x="106" y="560" textLength="101" lengthAdjust="spacingAndGlyphs">English (United States)</text>
<text x="586" y="560" textLength="26" lengthAdjust="spacingAndGlyphs">Notes</text>
<text x="645" y="560" textLength="46" lengthAdjust="spacingAndGlyphs">Comments</text>
<text x="963" y="560" textLength="21" lengthAdjust="spacingAndGlyphs">83 %</text>
</g>
<path d="M80,550H85V561H80ZM85,552L90,550V560L85,562" fill="none" stroke="#777"/><path d="M85,558L91,551" stroke="#777"/>
<path d="M577,550L574,553H580ZM573,555H581M573,558H581M573,561H581" stroke="#777" fill="#777" stroke-width="1"/>
<path d="M630,551H640V558H635L633,561V558H630Z" fill="#666"/>
<path d="M718.500,550.500H730.500V562.500H718.500ZM720.500,552.500H728.500V557H720.500ZM720.500,559.500H728.500" fill="none" stroke="#777"/>
<path d="M751.500,551H756.500V555H751.500ZM759,551H764V555H759ZM751.500,558H756.500V562H751.500ZM759,558H764V562H759Z" fill="none" stroke="#777"/>
<path d="M784.500,551.500H796V561H784.500ZM790,551.500V561M786,554H788.500M786,556.500H788.500M792,554H794.500M792,556.500H794.500" fill="none" stroke="#888"/>
<path d="M817,551H828M818,551V558H827V551M822.500,558V562M819.500,562.500H825.500" fill="none" stroke="#777"/>
<rect x="844" y="556" width="5.500" height="1.400" fill="#555"/>
<rect x="853" y="556" width="87" height="1" fill="#aaa"/>
<rect x="896" y="553.500" width="1" height="5.500" fill="#999"/>
<rect x="887" y="551" width="3" height="11" fill="#555"/>
<path d="M943,556.700H950M946.500,553.200V560.200" stroke="#555" stroke-width="1.400"/>
<rect x="1007.500" y="551.500" width="10.500" height="11" fill="none" stroke="#888"/><path d="M1009.500,553.500L1012,556M1016,553.500L1013.500,556M1009.500,560.500L1012,558M1016,560.500L1013.500,558" stroke="#777"/>
</g>
</svg>
</body></html>
